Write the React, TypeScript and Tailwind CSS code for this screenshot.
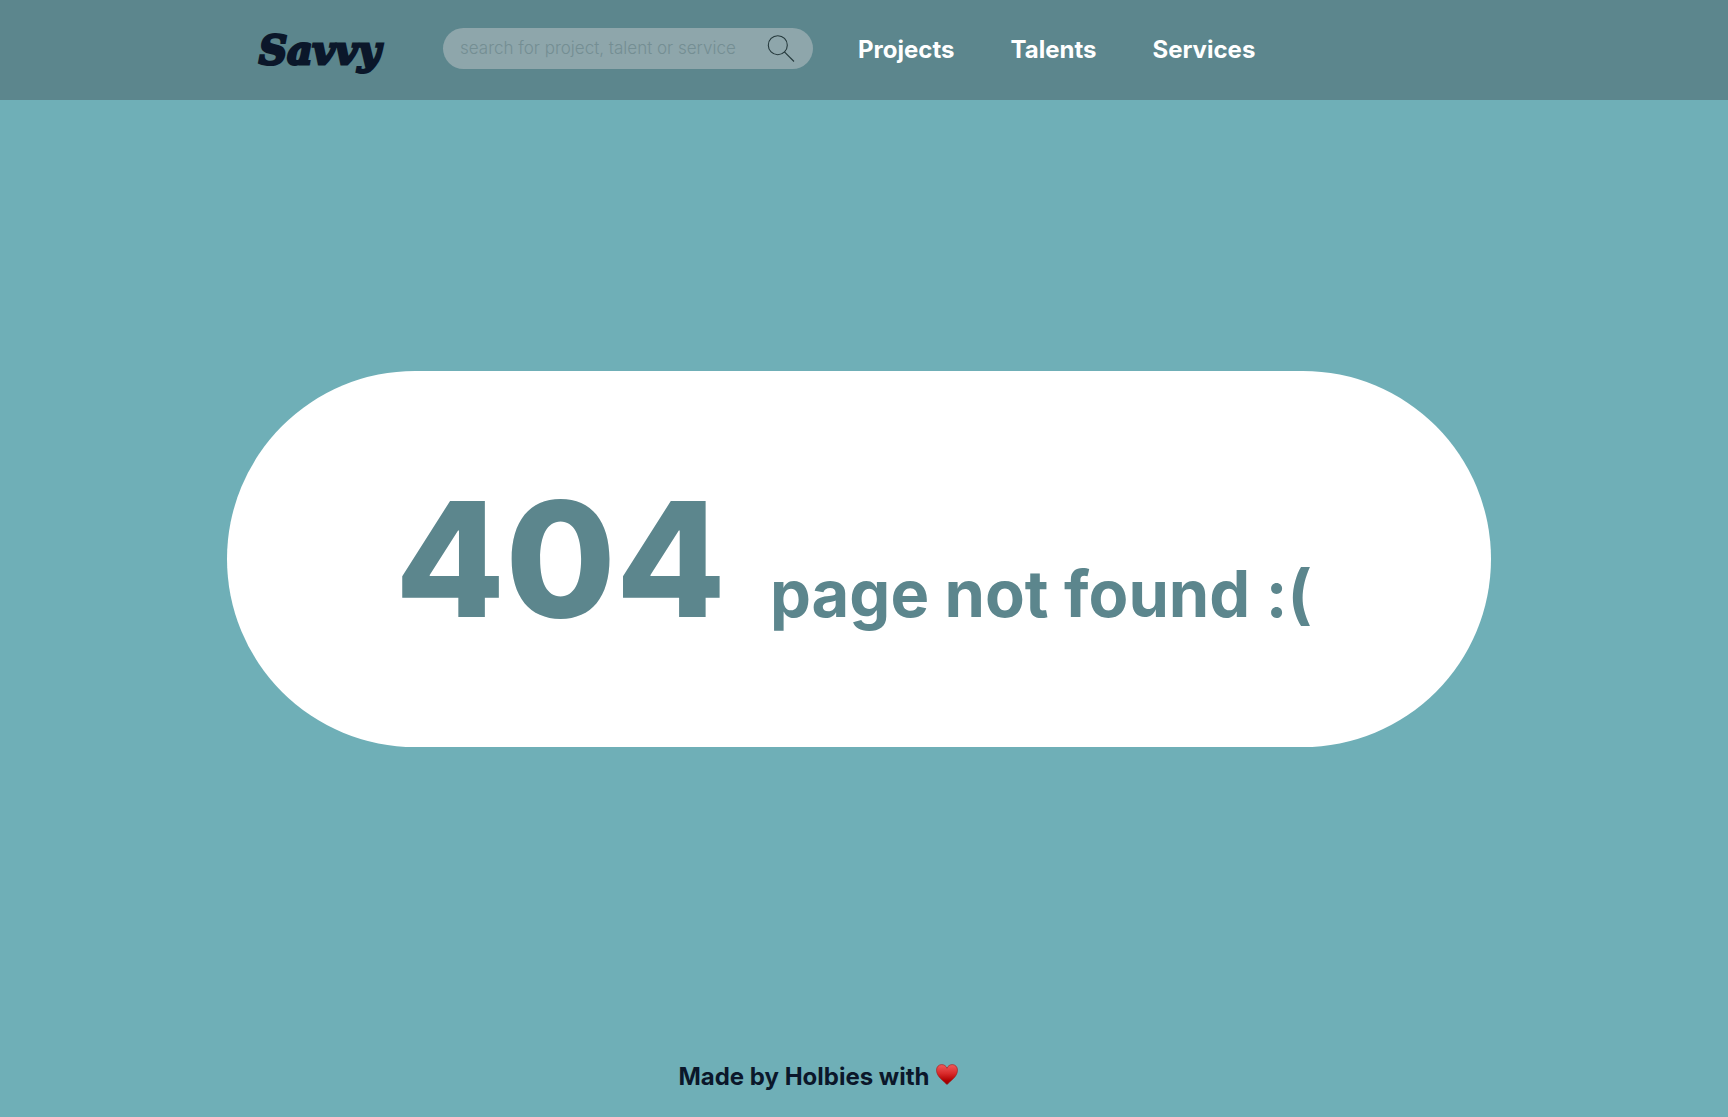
import React from "react";

const links = ["Projects", "Talents", "Services"];

function SearchIcon() {
  return (
    <svg viewBox="0 0 28 28" className="h-7 w-7" fill="none" stroke="#24383b" strokeWidth="1.1" aria-hidden="true">
      <circle cx="10.8" cy="10.2" r="9.5" />
      <path d="M17.4 16.9 L27 26.5" />
    </svg>
  );
}

function Heart() {
  return (
    <svg viewBox="0 0 22 21" className="h-[21px] w-[22px]" role="img" aria-label="love">
      <defs>
        <linearGradient id="heart" x1="0" y1="0" x2="0" y2="1">
          <stop offset="0" stopColor="#ef5b5b" />
          <stop offset="0.45" stopColor="#d92a2a" />
          <stop offset="0.8" stopColor="#b00000" />
          <stop offset="1" stopColor="#8f0000" />
        </linearGradient>
      </defs>
      <path
        d="M11 20.6 C8.5 17.6 0.5 13 0.5 6.2 C0.5 2.8 2.8 0.6 5.7 0.6 C8.2 0.6 10.2 2 11 4.3 C11.8 2 13.8 0.6 16.3 0.6 C19.2 0.6 21.5 2.8 21.5 6.2 C21.5 13 13.5 17.6 11 20.6 Z"
        fill="url(#heart)"
        stroke="#9c1c1c"
        strokeWidth="0.6"
      />
    </svg>
  );
}

export default function App() {
  return (
    <div className="flex min-h-screen flex-col bg-[#6fafb7] font-['Inter',sans-serif] text-[#0b172a]">
      <header className="flex h-[100px] items-start bg-[#5c868d] pl-[259px]">
        <a
          href="#"
          className="mt-[26px] w-[184px] font-['DejaVu_Serif',serif] text-[39px] leading-[48px] font-bold italic [-webkit-text-stroke:3px_#0b172a]"
        >
          Savvy
        </a>
        <form role="search" className="mt-7 flex h-[41px] w-[370px] items-center rounded-full bg-[#8ea6ab] pr-[18px] pl-[17px]">
          <input
            type="search"
            aria-label="Search"
            placeholder="search for project, talent or service"
            className="min-w-0 flex-1 bg-transparent text-[17px] font-light outline-none placeholder:text-[#748e93]"
          />
          <button type="button" aria-label="Submit search">
            <SearchIcon />
          </button>
        </form>
        <nav className="mt-9 ml-[45px] flex gap-14 text-[24px] leading-7 font-bold text-white">
          {links.map((label) => (
            <a key={label} href="#">
              {label}
            </a>
          ))}
        </nav>
      </header>

      <main className="flex flex-1 items-center pr-[237px] pl-[227px]">
        <section className="flex min-h-[376px] flex-1 items-center rounded-full bg-white pl-[168px]">
          <h1 className="flex items-baseline gap-11 whitespace-nowrap text-[#5c868d]">
            <span className="text-[160px] leading-[196px] font-extrabold">404</span>
            <span className="text-[65px] font-bold">page not found :(</span>
          </h1>
        </section>
      </main>

      <footer className="flex h-[100px] items-end justify-center gap-1.5 pr-[92px] pb-[26px] text-[24px] leading-7 font-bold">
        <p>Made by Holbies with</p>
        <span className="pb-1.5">
          <Heart />
        </span>
      </footer>
    </div>
  );
}
